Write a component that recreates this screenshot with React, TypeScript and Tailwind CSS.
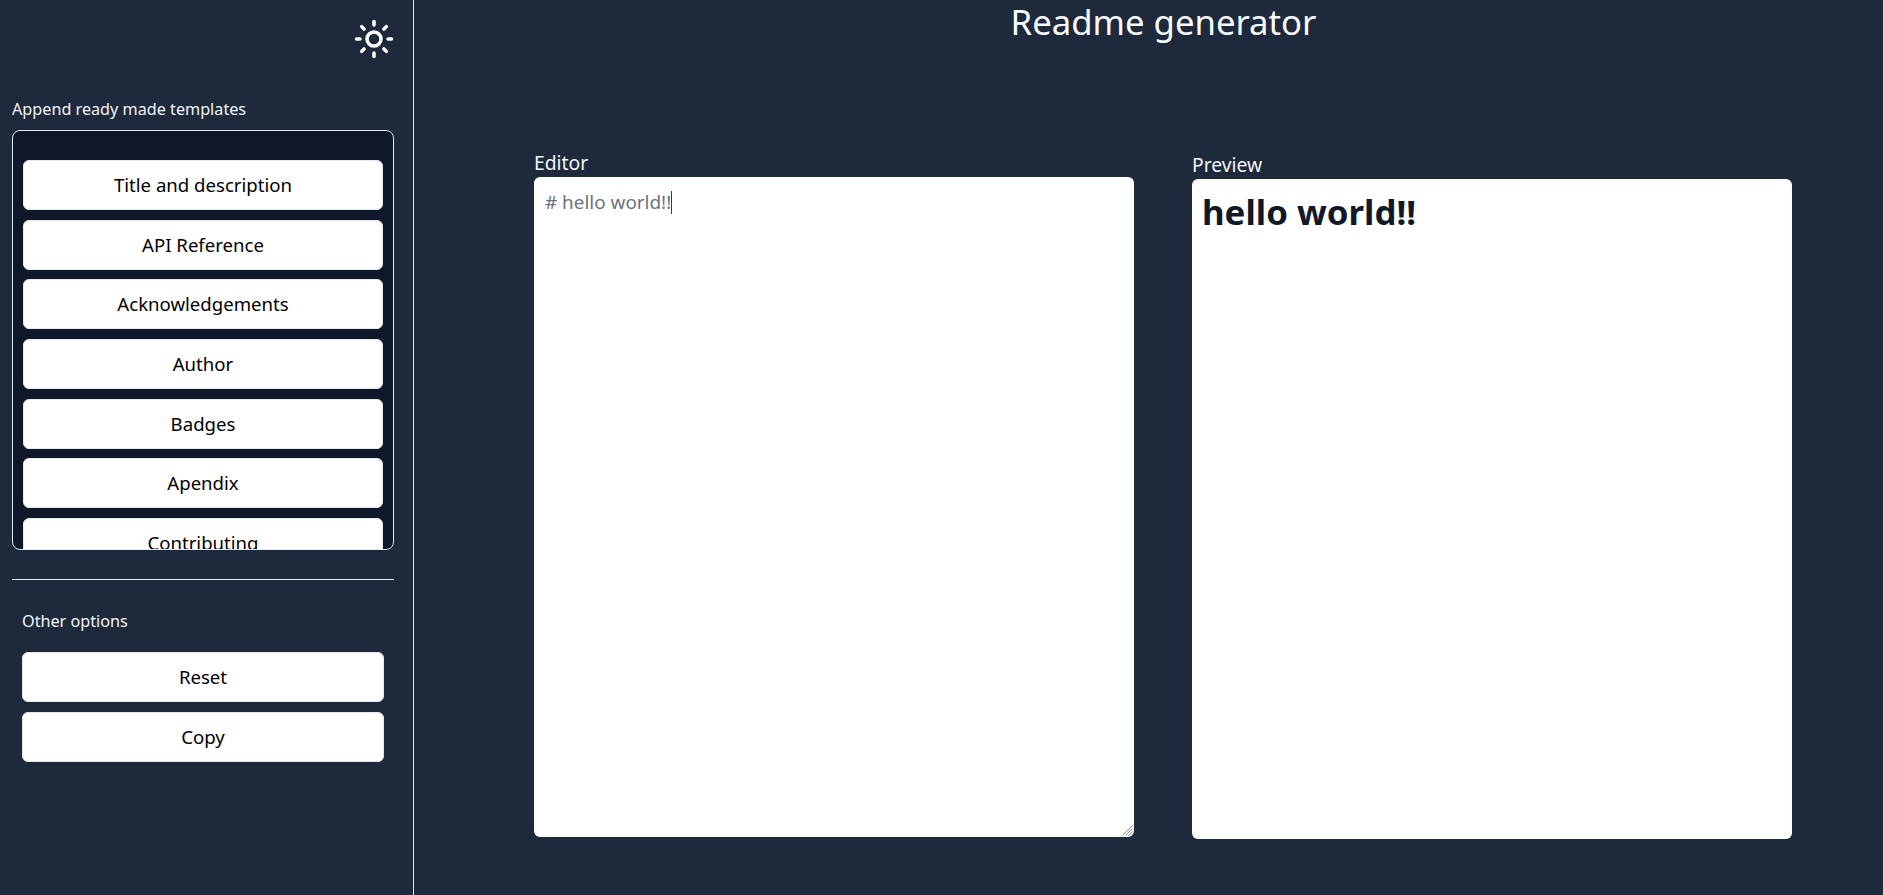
import { Sun } from "lucide-react";

const templates = ["Title and description", "API Reference", "Acknowledgements", "Author", "Badges", "Apendix", "Contributing", "Deployment"];
const font = "font-['Noto_Sans',sans-serif]";

export default function App() {
  return (
    <div className={`flex h-[895px] w-full overflow-hidden bg-[#1e293b] text-white ${font}`}>
      <aside className="flex h-full w-[414px] shrink-0 flex-col border-r border-[#e2e8f0] pl-3 pr-[19px]">
        <div className="flex h-[78px] items-center justify-end">
          <Sun size={42} strokeWidth={2} className="mr-[-1px]" />
        </div>
        <p className="mt-[19px] h-[33px] text-[16.2px] leading-[24px] text-[#f1f5f9]">Append ready made templates</p>
        <div className="h-[420px] overflow-hidden rounded-lg border border-[#e2e8f0] bg-[#0f172a] px-[10px] pt-[29px]">
          {templates.map((t) => (
            <button key={t} className="mb-[9.7px] flex h-[50px] w-full items-center justify-center rounded-md border border-[#e5e7eb] bg-white text-[18.6px] text-black">
              {t}
            </button>
          ))}
        </div>
        <hr className="mt-[29px] border-[#e2e8f0]" />
        <div className="px-[10px] pt-[29px]">
          <p className="h-[43px] text-[16.2px] leading-[24px] text-[#f1f5f9]">Other options</p>
          {["Reset", "Copy"].map((t) => (
            <button key={t} className="mb-[10px] flex h-[50px] w-full items-center justify-center rounded-md border border-[#e5e7eb] bg-white text-[18.6px] text-black">
              {t}
            </button>
          ))}
        </div>
      </aside>
      <main className="min-w-0 flex-1">
        <h1 className="h-[44px] pl-[30px] text-center text-[34.7px] leading-[44px] text-[#f8fafc]">Readme generator</h1>
        <div className="mt-[107px] flex items-start gap-[58px] pl-[120px]">
          <div className="w-[600px]">
            <label className="block h-[26px] text-[19.3px] leading-[24px] text-[#f1f5f9]">Editor</label>
            <div className="relative">
              <textarea
                readOnly
                value="# hello world!!"
                className="block h-[660px] w-[600px] resize-none rounded-md bg-white pt-[11px] pb-[10px] pr-[10px] pl-[11px] text-[18.9px] text-[#6b7280] outline-none"
              />
              <span className="absolute left-[137px] top-[14px] h-[23px] w-px bg-[#374151]" />
              <svg className="absolute right-[1px] bottom-[1px]" width="11" height="11" viewBox="0 0 11 11" stroke="#8a8a8a" strokeWidth="1" fill="none">
                <path d="M0.5 10.5 L10.5 0.5 M3.5 10.5 L10.5 3.5 M6.5 10.5 L10.5 6.5 M9 10.5 L10.5 9" />
              </svg>
            </div>
          </div>
          <div className="w-[600px] pt-[2px]">
            <label className="block h-[26px] text-[19.3px] leading-[24px] text-[#f1f5f9]">Preview</label>
            <div className="h-[660px] rounded-md bg-white px-[10px] pt-[13px]">
              <h2 className="text-[34.8px] leading-[40px] font-bold text-[#111827]">hello world!!</h2>
            </div>
          </div>
        </div>
      </main>
    </div>
  );
}
